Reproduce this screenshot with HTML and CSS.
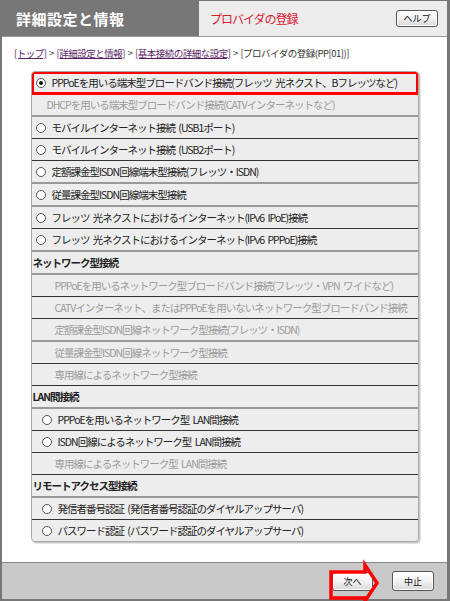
FILE: index.html
```html
<!DOCTYPE html>
<html lang="ja">

<head>
  <meta charset="UTF-8">
  <meta name="viewport" content="width=device-width, initial-scale=1.0">
  <title>プロバイダの登録</title>
  <link rel="stylesheet" href="styles.css">
</head>

<body>
  <div class="window">
    <div class="header">
      <div class="title">詳細設定と情報</div>
      <div class="subtitle">
        <span class="page-name">プロバイダの登録</span>
        <button class="btn help">ヘルプ</button>
      </div>
    </div>

    <div class="content">
      <div class="crumbs">
        <a href="#">[トップ]</a> &gt;
        <a href="#">[詳細設定と情報]</a> &gt;
        <a href="#">[基本接続の詳細な設定]</a> &gt;
        <span>[プロバイダの登録(PP[01])]</span>
      </div>

      <div class="panel">
        <div class="row selected"><span class="radio checked"></span>PPPoEを用いる端末型ブロードバンド接続(フレッツ 光ネクスト、Bフレッツなど)</div>
        <div class="row disabled soft pad-dhcp">DHCPを用いる端末型ブロードバンド接続(CATVインターネットなど)</div>
        <div class="row"><span class="radio"></span>モバイルインターネット接続 (USB1ポート)</div>
        <div class="row"><span class="radio"></span>モバイルインターネット接続 (USB2ポート)</div>
        <div class="row soft"><span class="radio"></span>定額課金型ISDN回線端末型接続(フレッツ・ISDN)</div>
        <div class="row soft"><span class="radio"></span>従量課金型ISDN回線端末型接続</div>
        <div class="row"><span class="radio"></span>フレッツ 光ネクストにおけるインターネット(IPv6 IPoE)接続</div>
        <div class="row soft"><span class="radio"></span>フレッツ 光ネクストにおけるインターネット(IPv6 PPPoE)接続</div>

        <div class="row section soft">ネットワーク型接続</div>
        <div class="row disabled pad-net">PPPoEを用いるネットワーク型ブロードバンド接続(フレッツ・VPN ワイドなど)</div>
        <div class="row disabled pad-net">CATVインターネット、またはPPPoEを用いないネットワーク型ブロードバンド接続</div>
        <div class="row disabled soft pad-net">定額課金型ISDN回線ネットワーク型接続(フレッツ・ISDN)</div>
        <div class="row disabled pad-net">従量課金型ISDN回線ネットワーク型接続</div>
        <div class="row disabled pad-net">専用線によるネットワーク型接続</div>

        <div class="row section soft">LAN間接続</div>
        <div class="row pad-lan"><span class="radio"></span>PPPoEを用いるネットワーク型 LAN間接続</div>
        <div class="row pad-lan"><span class="radio"></span>ISDN回線によるネットワーク型 LAN間接続</div>
        <div class="row disabled pad-net">専用線によるネットワーク型 LAN間接続</div>

        <div class="row section soft">リモートアクセス型接続</div>
        <div class="row pad-lan"><span class="radio"></span>発信者番号認証 (発信者番号認証のダイヤルアップサーバ)</div>
        <div class="row pad-lan"><span class="radio"></span>パスワード認証 (パスワード認証のダイヤルアップサーバ)</div>
      </div>
    </div>

    <div class="footer">
      <button class="btn next">次へ</button>
      <button class="btn cancel">中止</button>
    </div>

    <svg class="marker" width="450" height="601" viewBox="0 0 450 601">
      <path d="M331 572 H365 V565 L377 583 L365 601 V598 H331 Z" fill="none" stroke="#f00" stroke-width="3.5" />
    </svg>
  </div>
</body>

</html>
```

FILE: styles.css
```css
body {
  margin: 0;
  font-family: "Noto Sans CJK JP", "Liberation Sans", sans-serif;
  color: #222;
}

.window {
  position: relative;
  width: 450px;
  height: 601px;
  box-sizing: border-box;
  display: flex;
  flex-direction: column;
  border: 1px solid #777;
  border-left-width: 2px;
  border-right-width: 3px;
  border-bottom-width: 2px;
  background: #fff;
}

.header {
  display: flex;
  height: 35px;
  border-bottom: 1px solid #999;
}

.header .title {
  width: 183px;
  padding-left: 14px;
  background: #777;
  color: #fff;
  font-size: 15px;
  font-weight: bold;
  line-height: 35px;
  letter-spacing: 0.5px;
}

.header .subtitle {
  flex: 1;
  display: flex;
  align-items: center;
  justify-content: space-between;
  padding: 0 9px 0 11px;
  background: #ececec;
}

.page-name {
  color: #d8202c;
  font-size: 12px;
  letter-spacing: -1px;
}

.btn {
  padding: 0;
  border: 1px solid #555;
  border-radius: 3px;
  background: linear-gradient(#fff, #f2f2f2 50%, #d8d8d8);
  box-shadow: inset 0 0 0 1px #fff;
  font-family: inherit;
  font-size: 9px;
  color: #111;
  cursor: pointer;
}

.btn.help {
  width: 42px;
  height: 17px;
}

.content {
  flex: 1;
  padding-top: 9px;
}

.crumbs {
  padding-left: 12px;
  font-size: 9.5px;
  line-height: 14px;
  letter-spacing: -0.5px;
  word-spacing: 1px;
  color: #333;
  margin-bottom: 11px;
}

.crumbs a {
  color: #5b1f66;
}

.panel {
  width: 386px;
  margin: 0 auto;
  border: 1px solid #aaa;
  border-radius: 4px;
  background: #ededed;
  box-shadow: 1px 1px 0 #c8c8c8, 2px 2px 0 #e4e4e4;
  overflow: hidden;
}

.row {
  display: flex;
  align-items: center;
  height: 21px;
  padding-left: 4px;
  border-bottom: 1px solid #333;
  font-size: 10.5px;
  letter-spacing: -1px;
  word-spacing: 2px;
  white-space: nowrap;
}

.row:last-child {
  border-bottom: none;
}

.row.soft {
  border-bottom: 2px solid #999;
}

.row.selected {
  outline: 3px solid #f00;
  outline-offset: -2px;
}

.row.disabled {
  color: #9b9b9b;
}

.row.section {
  padding-left: 1px;
  font-weight: bold;
  color: #222;
}

.row.pad-dhcp {
  padding-left: 15px;
}

.row.pad-net {
  padding-left: 23px;
}

.row.pad-lan {
  padding-left: 10px;
}

.radio {
  width: 8px;
  height: 8px;
  margin-right: 6px;
  border: 1px solid #555;
  border-radius: 50%;
  background: #fff;
  flex-shrink: 0;
  position: relative;
}

.radio.checked::after {
  content: "";
  position: absolute;
  top: 2px;
  left: 2px;
  width: 4px;
  height: 4px;
  border-radius: 50%;
  background: #111;
}

.footer {
  display: flex;
  justify-content: flex-end;
  align-items: center;
  gap: 19px;
  height: 36px;
  padding-right: 13px;
  border-top: 1px solid #888;
  background: #c9c9c9;
}

.btn.next {
  width: 41px;
  height: 19px;
}

.btn.cancel {
  width: 42px;
  height: 20px;
}

.marker {
  position: absolute;
  top: -1px;
  left: -2px;
  pointer-events: none;
}
```
